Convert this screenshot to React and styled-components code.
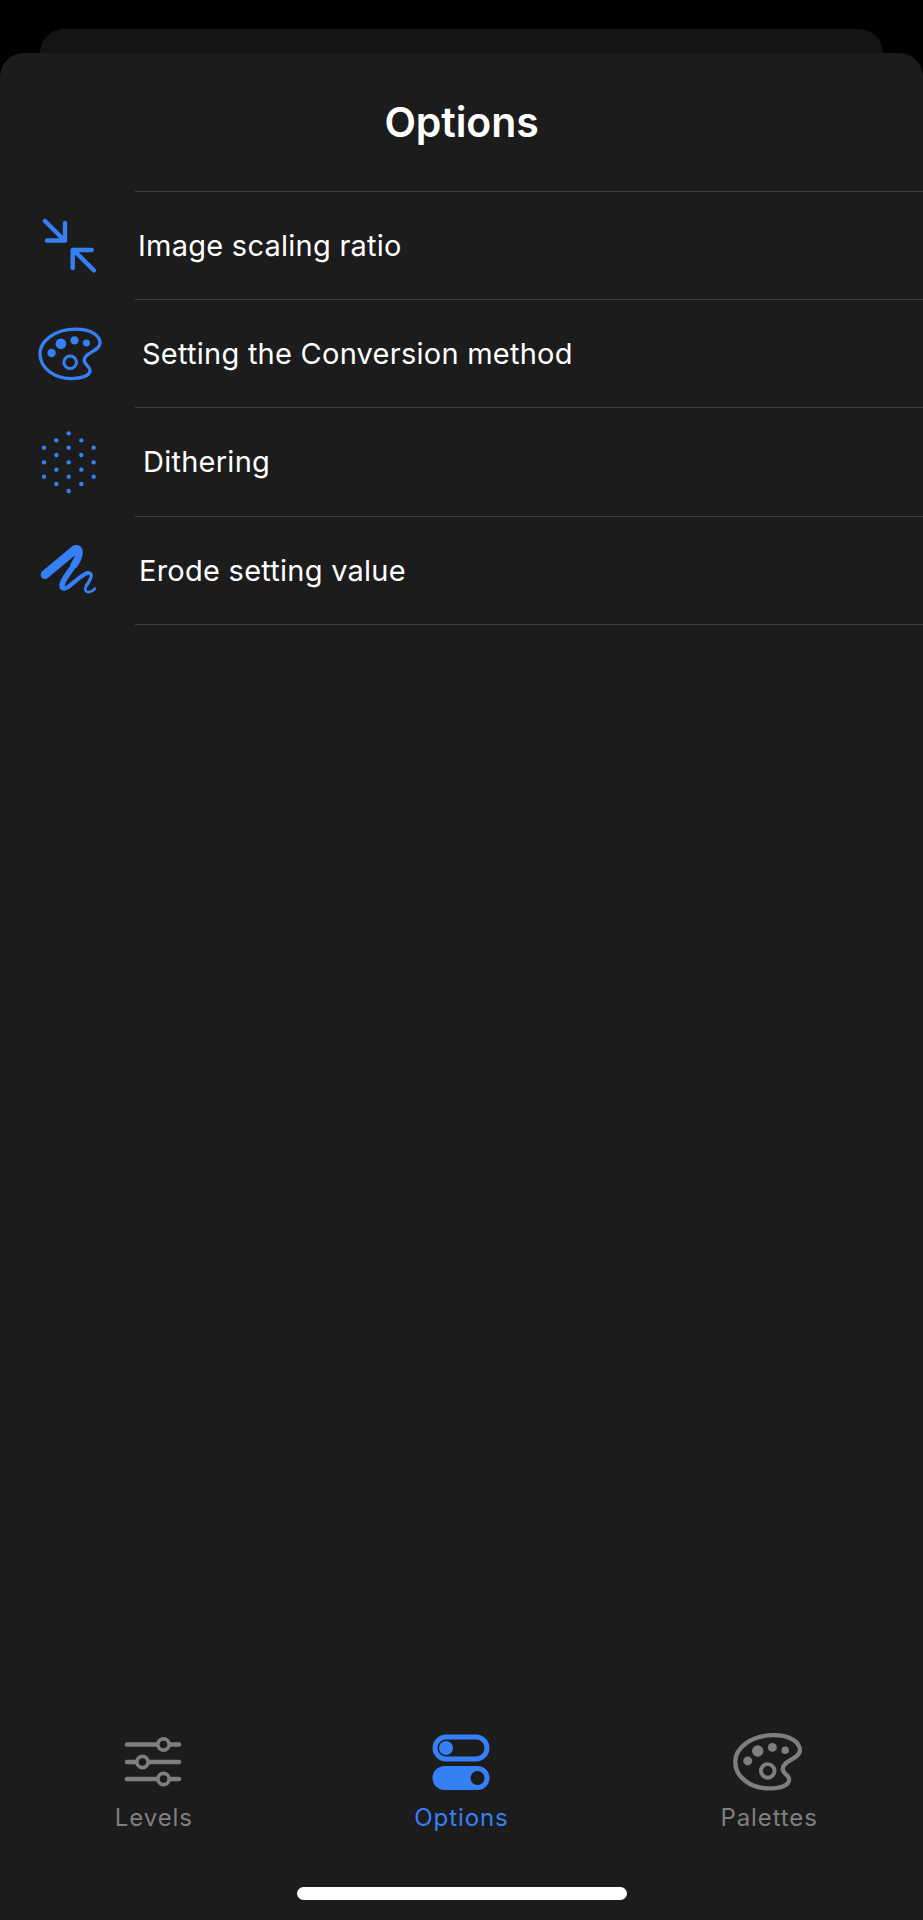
import React from "react";
import styled, { createGlobalStyle } from "styled-components";

const BLUE = "#3680f6";
const GRAY = "#7f7f80";

const GlobalStyle = createGlobalStyle`
  html, body {
    margin: 0;
    padding: 0;
    background: #000;
  }
  body {
    font-family: Inter, "Open Sans", "Liberation Sans", sans-serif;
    -webkit-font-smoothing: antialiased;
  }
`;

const Page = styled.div`
  width: 923px;
  height: 1920px;
  padding-top: 29px;
  box-sizing: border-box;
  display: flex;
  flex-direction: column;
  overflow: hidden;
  background: #000;
`;

const BackSheet = styled.div`
  height: 24px;
  margin: 0 40px;
  background: #141414;
  border-radius: 24px 24px 0 0;
`;

const Sheet = styled.main`
  flex: 1;
  display: flex;
  flex-direction: column;
  background: #1c1c1c;
  border-radius: 24px 24px 0 0;
`;

const Title = styled.h1`
  margin: 0;
  height: 139px;
  box-sizing: border-box;
  padding-bottom: 2px;
  display: flex;
  align-items: center;
  justify-content: center;
  color: #fff;
  font-size: 41px;
  font-weight: 600;
  letter-spacing: -0.1px;
`;

const List = styled.ul`
  margin: 0;
  padding: 0;
  list-style: none;
`;

const Row = styled.li`
  display: flex;
  height: 108.2px;
`;

const IconSlot = styled.div`
  width: 135px;
  flex: none;
  display: flex;
  align-items: center;
  justify-content: center;
  padding-left: 3px;
  box-sizing: border-box;
  color: ${BLUE};
`;

const RowBody = styled.div`
  flex: 1;
  display: flex;
  align-items: center;
  padding-left: ${(p) => p.$indent}px;
  border-bottom: 1px solid #3d3d3f;
  box-shadow: ${(p) => (p.$first ? "0 -1px 0 #3d3d3f" : "none")};
  color: #fff;
  font-size: 29px;
  font-weight: 400;
  letter-spacing: 0.25px;
`;

const TabBar = styled.nav`
  margin-top: auto;
  display: grid;
  grid-template-columns: repeat(3, 1fr);
`;

const Tab = styled.div`
  display: flex;
  flex-direction: column;
  align-items: center;
  color: ${(p) => (p.$active ? BLUE : GRAY)};
`;

const TabIcon = styled.div`
  height: 58px;
  padding-right: ${(p) => p.$nudge || 0}px;
  display: flex;
  align-items: center;
  justify-content: center;
`;

const TabLabel = styled.span`
  margin-top: 12px;
  font-size: 24px;
  line-height: 30px;
  letter-spacing: 0.9px;
`;

const HomeBar = styled.div`
  width: 330px;
  height: 13px;
  margin: 54px auto 20px;
  border-radius: 7px;
  background: #fff;
`;

const ArrowsIcon = () => (
  <svg width="54" height="56" viewBox="42 218 54 56" fill="none" stroke="currentColor" strokeWidth="4.4" strokeLinecap="round" strokeLinejoin="round">
    <path d="M45 221 64 240M65 223v17.5H47" />
    <path d="M94 270.5 73.5 250M72.7 268v-18h19" />
  </svg>
);

const PaletteIcon = ({ width, height, strokeWidth = 10 }) => (
  <svg width={width} height={height} viewBox="48 382 196 162" fill="none" stroke="currentColor" strokeWidth={strokeWidth}>
    <path d="M57 462C57 425 100 388 165 388C212 388 238 408 238 430C238 455 190 458 190 482C190 497 208 498 208 513C208 530 180 537 150 537C100 537 57 505 57 462Z" />
    <circle cx="148" cy="488" r="19" strokeWidth={strokeWidth - 1} />
    <g fill="currentColor" stroke="none">
      <circle cx="120" cy="432" r="16" />
      <circle cx="161" cy="422" r="12.5" />
      <circle cx="197" cy="430" r="10.5" />
      <circle cx="92" cy="460" r="12.5" />
    </g>
  </svg>
);

const ditherColumns = [
  [72, [113, 157, 200]],
  [109, [91, 135, 179, 222]],
  [146, [70, 113, 157, 200, 243]],
  [184, [91, 135, 179, 222]],
  [221, [113, 157, 200]],
];

const DitherIcon = () => (
  <svg width="58" height="64" viewBox="60 60 174 192" fill="currentColor">
    {ditherColumns.map(([x, ys]) => ys.map((y) => <circle key={`${x}-${y}`} cx={x} cy={y} r="6.6" />))}
  </svg>
);

const ScribbleIcon = () => (
  <svg width="60" height="56" viewBox="60 400 180 168" fill="none" stroke="currentColor" strokeLinecap="round" strokeLinejoin="round">
    <path d="M78 495 168 420" strokeWidth="26" />
    <path d="M168 418C190 412 180 445 166 465" strokeWidth="22" />
    <path d="M166 465C150 490 124 518 130 532" strokeWidth="17" />
    <path d="M130 534C142 548 180 496 206 490" strokeWidth="13" />
    <path d="M206 490C226 488 214 512 202 528" strokeWidth="10" />
    <path d="M202 528C190 548 212 554 228 537" strokeWidth="8" />
  </svg>
);

const SlidersIcon = () => (
  <svg width="60" height="50" viewBox="123 1737 60 50" fill="none" stroke={GRAY}>
    <g strokeWidth="4.6" strokeLinecap="round">
      <path d="M127 1744.5h52M127 1762h52M127 1779h52" />
    </g>
    <g fill="#1c1c1c" strokeWidth="3.6">
      <circle cx="163.5" cy="1744.5" r="5.6" />
      <circle cx="142.5" cy="1762" r="5.6" />
      <circle cx="163.5" cy="1779" r="5.6" />
    </g>
  </svg>
);

const TogglesIcon = () => (
  <svg width="58" height="56" viewBox="0 0 58 56">
    <rect x="3" y="3" width="52" height="22" rx="11" fill="none" stroke={BLUE} strokeWidth="5" />
    <circle cx="14" cy="14" r="7" fill={BLUE} />
    <rect x="0.5" y="32" width="57" height="24" rx="12" fill={BLUE} />
    <circle cx="45.5" cy="44" r="7" fill="#1c1c1c" />
  </svg>
);

const options = [
  { label: "Image scaling ratio", icon: <ArrowsIcon />, indent: 3 },
  { label: "Setting the Conversion method", icon: <PaletteIcon width={65} height={54} />, indent: 7 },
  { label: "Dithering", icon: <DitherIcon />, indent: 8 },
  { label: "Erode setting value", icon: <ScribbleIcon />, indent: 4 },
];

const tabs = [
  { label: "Levels", icon: <SlidersIcon />, nudge: 1 },
  { label: "Options", icon: <TogglesIcon />, active: true },
  { label: "Palettes", icon: <PaletteIcon width={70} height={58} strokeWidth={12} />, nudge: 5 },
];

export default function App() {
  return (
    <Page>
      <GlobalStyle />
      <BackSheet />
      <Sheet>
        <Title>Options</Title>
        <List>
          {options.map((o, i) => (
            <Row key={o.label}>
              <IconSlot>{o.icon}</IconSlot>
              <RowBody $indent={o.indent} $first={i === 0}>{o.label}</RowBody>
            </Row>
          ))}
        </List>
        <TabBar>
          {tabs.map((t) => (
            <Tab key={t.label} $active={t.active}>
              <TabIcon $nudge={t.nudge}>{t.icon}</TabIcon>
              <TabLabel>{t.label}</TabLabel>
            </Tab>
          ))}
        </TabBar>
        <HomeBar />
      </Sheet>
    </Page>
  );
}
